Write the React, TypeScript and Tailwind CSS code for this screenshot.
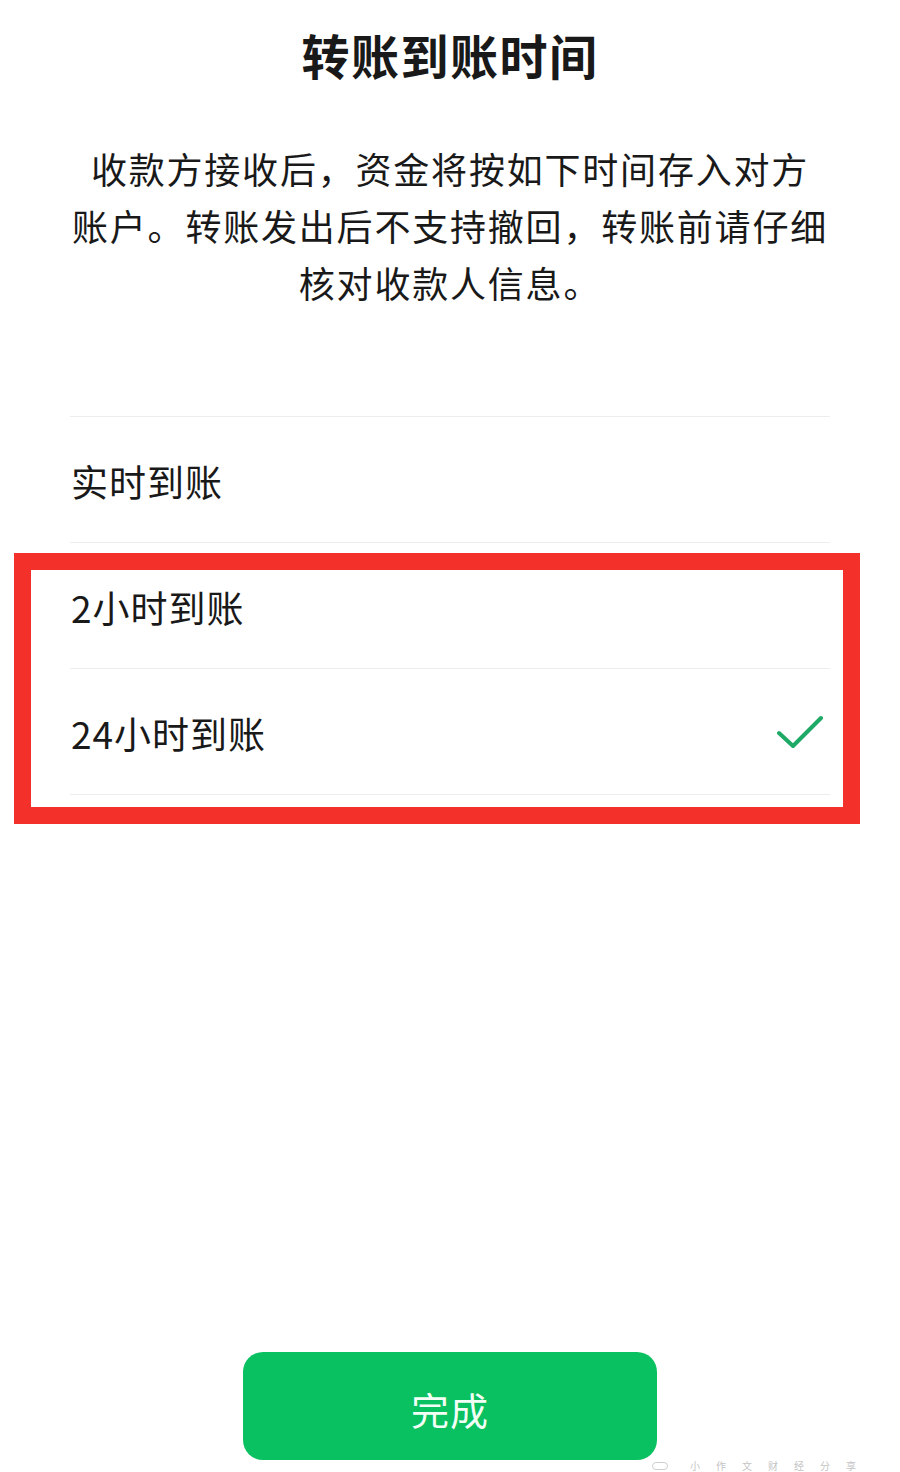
const FONT = { fontFamily: '"Noto Sans CJK SC", "Noto Sans", sans-serif' };

const OPTIONS = ["实时到账", "2小时到账", "24小时到账"];
const SELECTED = 2;

function Check() {
  return (
    <svg width="46" height="34" viewBox="0 0 46 34" fill="none" aria-hidden="true">
      <path d="M2 18 L16 31 L44 3" stroke="#1fa966" strokeWidth="4" strokeLinecap="round" strokeLinejoin="round" />
    </svg>
  );
}

export default function App() {
  return (
    <div className="w-[900px] h-[1472px] bg-white flex flex-col overflow-hidden text-[#191919]" style={FONT}>
      <h1 className="mt-[30px] text-center text-[48px] leading-[48px] font-semibold tracking-[1.5px]">转账到账时间</h1>

      <p className="mt-[62px] text-center text-[36px] leading-[57px] tracking-[1.8px]">
        收款方接收后，资金将按如下时间存入对方
        <br />
        账户。转账发出后不支持撤回，转账前请仔细
        <br />
        核对收款人信息。
      </p>

      {/* option list; the red frame is a screenshot annotation laid over rows 2-3 */}
      <div className="relative mx-[70px] mt-[105px] border-t border-[#ededed]">
        {OPTIONS.map((label, i) => (
          <div key={label} className="h-[126px] flex items-center justify-between border-b border-[#ededed] pl-[1px] pr-[7px]">
            <span className="text-[37px] leading-none tracking-[1px] pt-[4px]">{label}</span>
            {i === SELECTED && <Check />}
          </div>
        ))}
        <div className="absolute left-[-56px] top-[136px] w-[846px] h-[271px] border-[17px] border-[#f3302a] pointer-events-none" />
      </div>

      <div className="mt-[557px] flex justify-center">
        <button
          type="button"
          className="w-[414px] h-[108px] rounded-[20px] bg-[#09c160] text-[38px] text-[#f2fff6] tracking-[1px] flex items-center justify-center pt-[4px]"
        >
          完成
        </button>
      </div>

      <div className="pt-[1px] pl-[652px] flex items-center gap-[22px] text-[10px] leading-[10px] text-[#c4c4c4]">
        <span className="w-[16px] h-[8px] rounded-full border border-[#cfcfcf]" />
        <span className="tracking-[16px]">小作文财经分享</span>
      </div>
    </div>
  );
}
